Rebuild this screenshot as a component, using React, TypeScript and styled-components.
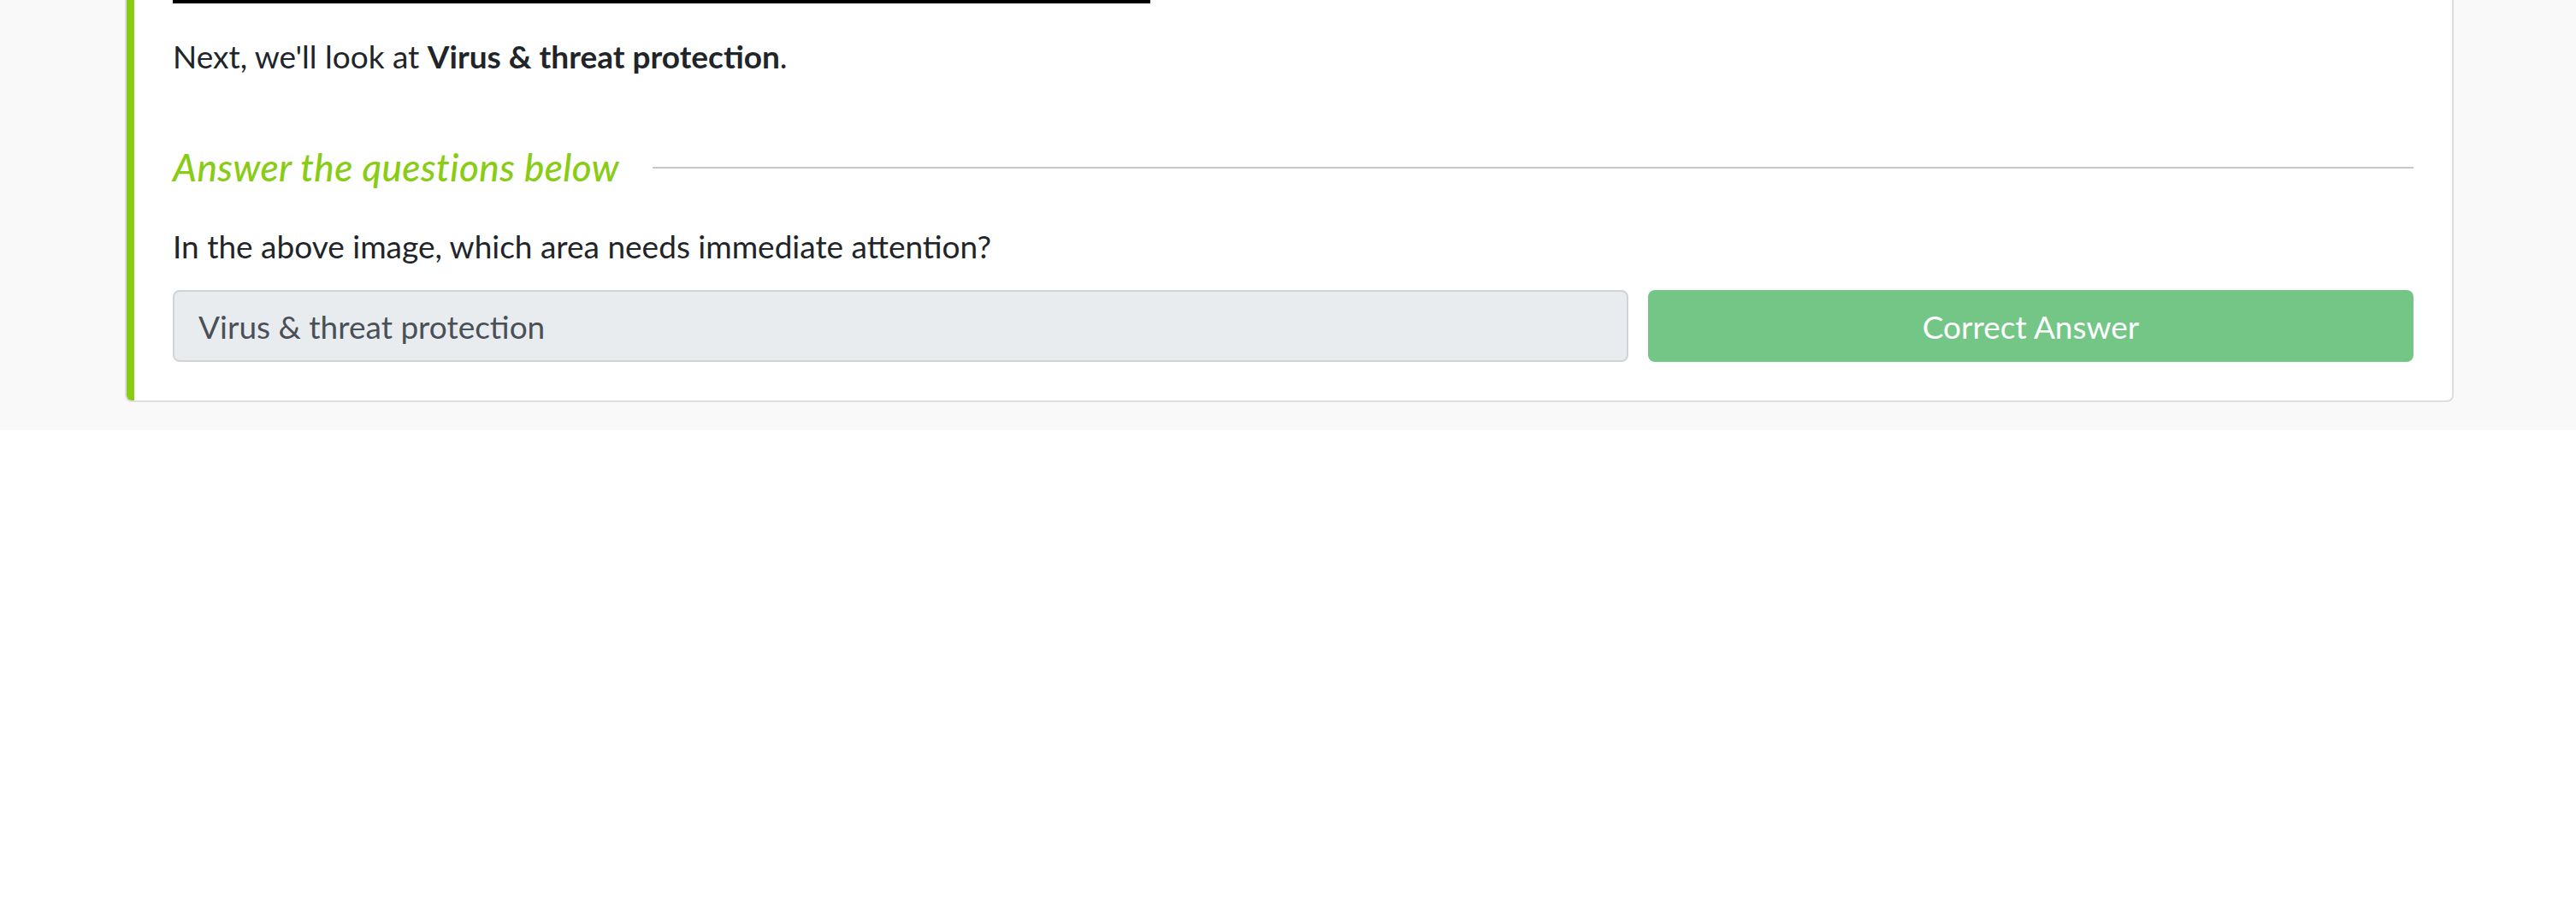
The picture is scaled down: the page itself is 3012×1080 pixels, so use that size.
import React from "react";
import styled, { createGlobalStyle } from "styled-components";

const GlobalStyle = createGlobalStyle`
  html, body {
    margin: 0;
    padding: 0;
    background: #ffffff;
    font-family: "Lato", "Open Sans", sans-serif;
    color: #212529;
  }
`;

const Page = styled.div`
  background: #f9f9f9;
  padding: 0 143px 33px 146px;
`;

const Card = styled.section`
  background: #ffffff;
  border: 2px solid #dedede;
  border-top: none;
  border-radius: 0 0 8px 8px;
  overflow: hidden;
`;

const CardBody = styled.div`
  border-left: 9px solid #88cc14;
  padding: 0 45px 45px 45px;
  display: flex;
  flex-direction: column;
`;

const ImageFrame = styled.div`
  width: 1143px;
  height: 4px;
  background: #000000;
  margin-bottom: 34px;
`;

const Paragraph = styled.p<{ $gap: number }>`
  margin: 0 0 ${(p) => p.$gap}px 0;
  font-size: 37px;
  line-height: 56px;
  color: #212529;

  strong {
    font-weight: 700;
  }
`;

const SectionHeader = styled.div`
  display: flex;
  align-items: center;
  gap: 39px;
  height: 52px;
  margin-bottom: 39px;
`;

const SectionTitle = styled.h3`
  margin: 0;
  font-size: 44px;
  line-height: 52px;
  font-style: italic;
  font-weight: 500;
  letter-spacing: 0.45px;
  color: #88cc14;
  white-space: nowrap;
`;

const Rule = styled.div`
  flex: 1;
  height: 2px;
  margin-top: 2px;
  background: #c8c8c8;
`;

const AnswerRow = styled.div`
  display: grid;
  grid-template-columns: 1702fr 895fr;
  gap: 23px;
  height: 84px;
`;

const AnswerInput = styled.input`
  box-sizing: border-box;
  width: 100%;
  height: 84px;
  margin: 0;
  padding: 0 28px;
  border: 2px solid #ced4da;
  border-radius: 8px;
  background: #e9ecef;
  color: #495057;
  font-family: "Lato", "Open Sans", sans-serif;
  font-size: 37px;
  outline: none;
`;

const SubmitButton = styled.button`
  box-sizing: border-box;
  height: 84px;
  margin: 0;
  border: none;
  border-radius: 8px;
  background: #73c686;
  color: #ffffff;
  font-family: "Lato", "Open Sans", sans-serif;
  font-size: 37px;
  cursor: default;
`;

export default function App() {
  return (
    <>
      <GlobalStyle />
      <Page>
        <Card>
          <CardBody>
            <ImageFrame />
            <Paragraph $gap={75}>
              Next, we'll look at <strong>Virus &amp; threat protection</strong>.
            </Paragraph>
            <SectionHeader>
              <SectionTitle>Answer the questions below</SectionTitle>
              <Rule />
            </SectionHeader>
            <Paragraph $gap={23}>In the above image, which area needs immediate attention?</Paragraph>
            <AnswerRow>
              <AnswerInput readOnly value="Virus & threat protection" />
              <SubmitButton disabled>Correct Answer</SubmitButton>
            </AnswerRow>
          </CardBody>
        </Card>
      </Page>
    </>
  );
}
